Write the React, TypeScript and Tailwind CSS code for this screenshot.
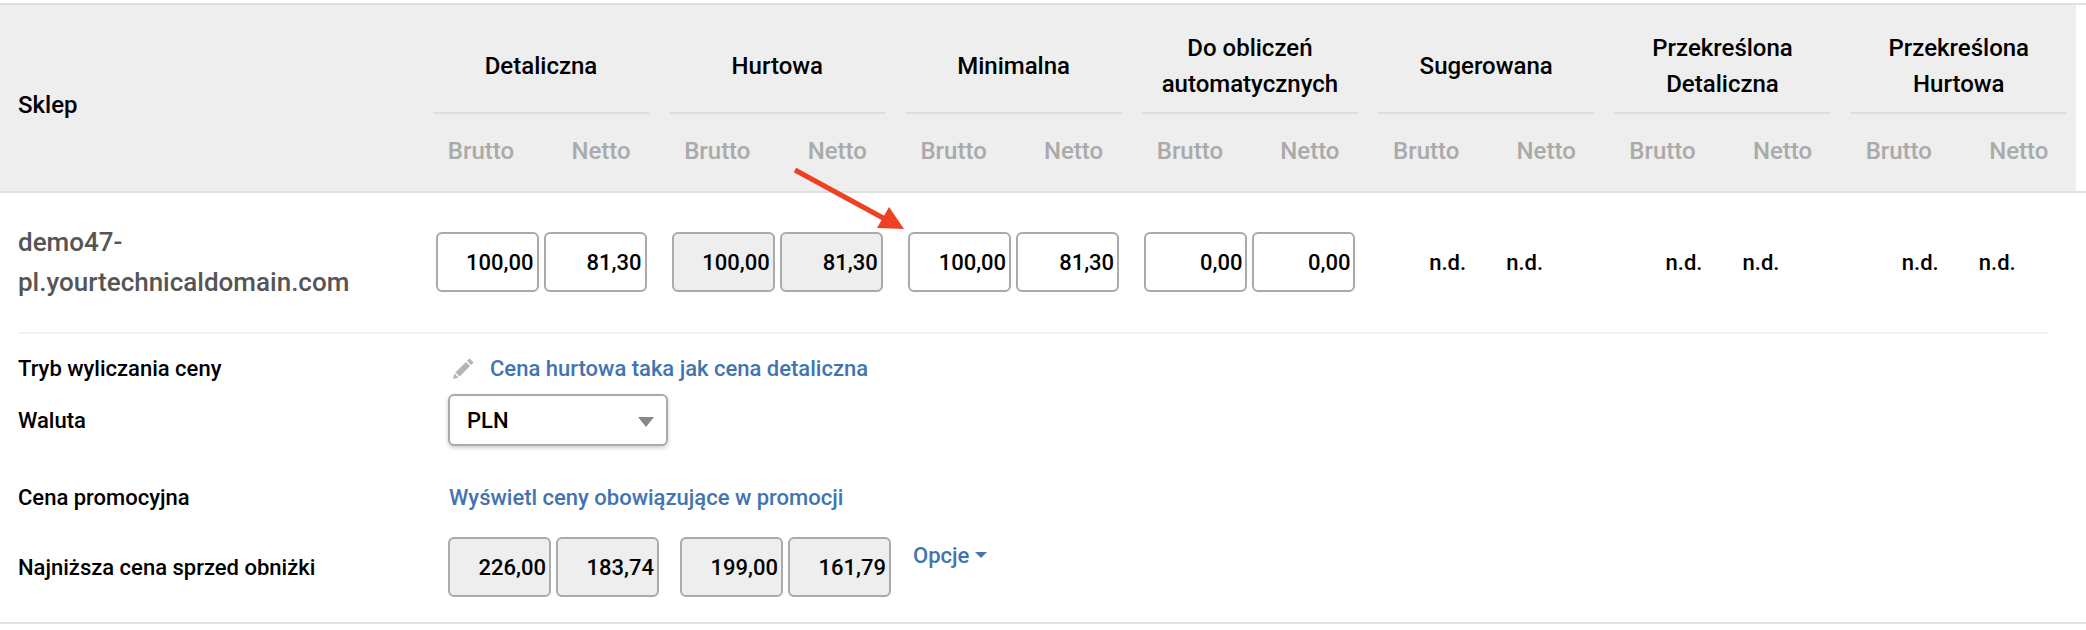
const groups = [
  { title: "Detaliczna" },
  { title: "Hurtowa" },
  { title: "Minimalna" },
  { title: "Do obliczeń automatycznych" },
  { title: "Sugerowana" },
  { title: "Przekreślona Detaliczna" },
  { title: "Przekreślona Hurtowa" },
];

function PriceInput({ value, grey }: { value: string; grey?: boolean }) {
  return (
    <input
      readOnly
      value={value}
      className={`h-[60px] w-[103px] rounded-[6px] border-2 border-[#aaaaaa] pr-[3px] text-right text-[22px] font-medium text-black outline-none ${
        grey ? "bg-[#eeeeee]" : "bg-white"
      }`}
    />
  );
}

function PricePair({ a, b, grey }: { a: string; b: string; grey?: boolean }) {
  return (
    <div className="flex w-[216px] justify-center gap-[5px]">
      <PriceInput value={a} grey={grey} />
      <PriceInput value={b} grey={grey} />
    </div>
  );
}

function NotAvailable() {
  return (
    <div className="flex w-[216px] justify-center text-black">
      <span className="w-[77px] text-center">n.d.</span>
      <span className="w-[77px] text-center">n.d.</span>
    </div>
  );
}

function PencilIcon() {
  return (
    <svg viewBox="0 0 21 21" className="h-[21px] w-[21px] fill-[#b4b4b4]">
      <path d="M0 21l1.4-5.6 4.2 4.2z" />
      <path d="M2.4 14.4L12.9 3.9l4.2 4.2L6.6 18.6z" />
      <path d="M14 2.8L15.8 1c.4-.4 1-.4 1.4 0l2.8 2.8c.4.4.4 1 0 1.4L18.2 7z" />
    </svg>
  );
}

export default function App() {
  return (
    <div className="relative h-[630px] w-[2086px] overflow-hidden bg-white pt-[3px] font-[family-name:Roboto,sans-serif] text-[22px] font-medium text-black">
      <div className="border-y-2 border-[#e0e0e0]">
        <div className="flex h-[186px] w-[2076px] bg-[#eeeeee] text-[24px]">
          <div className="flex w-[433px] items-center pl-[18px] pt-[14px]">Sklep</div>
          <div className="flex gap-[20.3px]">
            {groups.map((g) => (
              <div key={g.title} className="flex w-[216px] flex-col">
                <div className="flex h-[109px] items-center justify-center border-b-2 border-[#dddddd] pt-[14px] text-center leading-[36px]">
                  {g.title}
                </div>
                <div className="-mx-[12px] grid flex-1 grid-cols-2 items-center pb-[4px] text-center text-[#aaaaaa]">
                  <span>Brutto</span>
                  <span>Netto</span>
                </div>
              </div>
            ))}
          </div>
        </div>
      </div>

      <div className="flex pb-[30px] pl-[18px] pt-[29px]">
        <div className="flex w-[415px] flex-col justify-center text-[26px] leading-[40px] text-[#555555]">
          <span>demo47-</span>
          <span>pl.yourtechnicaldomain.com</span>
        </div>
        <div className="flex items-center gap-[20.3px]">
          <PricePair a="100,00" b="81,30" />
          <PricePair a="100,00" b="81,30" grey />
          <PricePair a="100,00" b="81,30" />
          <PricePair a="0,00" b="0,00" />
          <NotAvailable />
          <NotAvailable />
          <NotAvailable />
        </div>
      </div>
      <div className="ml-[18px] w-[2030px] border-t-2 border-[#f3f3f3]" />

      <div className="flex flex-col pl-[18px] pt-[18px]">
        <div className="flex h-[32px] items-center">
          <span className="w-[435px]">Tryb wyliczania ceny</span>
          <PencilIcon />
          <a className="ml-[16px] text-[#4174b0]">Cena hurtowa taka jak cena detaliczna</a>
        </div>

        <div className="mt-[10px] flex h-[52px] items-center">
          <span className="w-[430px]">Waluta</span>
          <div className="flex h-[52px] w-[220px] items-center justify-between rounded-[6px] border-2 border-[#aaaaaa] bg-white pl-[17px] pr-[12px] shadow-[0_2px_4px_rgba(0,0,0,0.2)]">
            <span>PLN</span>
            <span className="mt-[4px] h-0 w-0 border-x-[8px] border-t-[10px] border-x-transparent border-t-[#888888]" />
          </div>
        </div>

        <div className="mt-[35px] flex h-[32px] items-center">
          <span className="w-[431px]">Cena promocyjna</span>
          <a className="text-[#4174b0]">Wyświetl ceny obowiązujące w promocji</a>
        </div>

        <div className="mt-[24px] flex h-[60px] items-center">
          <span className="w-[430px]">Najniższa cena sprzed obniżki</span>
          <div className="flex gap-[5px]">
            <PriceInput value="226,00" grey />
            <PriceInput value="183,74" grey />
          </div>
          <div className="ml-[21px] flex gap-[5px]">
            <PriceInput value="199,00" grey />
            <PriceInput value="161,79" grey />
          </div>
          <a className="mb-[24px] ml-[22px] flex items-center gap-[6px] text-[#4174b0]">
            Opcje
            <span className="h-0 w-0 border-x-[6px] border-t-[6px] border-x-transparent border-t-[#4174b0]" />
          </a>
        </div>
      </div>

      <div className="mt-[25px] border-t-2 border-[#e0e0e0]" />

      {/* red annotation arrow over the table */}
      <svg className="absolute left-0 top-0" width="2086" height="630" fill="#ee4023">
        <path d="M795 170L885 219" stroke="#ee4023" strokeWidth="5" />
        <path d="M904 229L877 228L889 207z" />
      </svg>
    </div>
  );
}
